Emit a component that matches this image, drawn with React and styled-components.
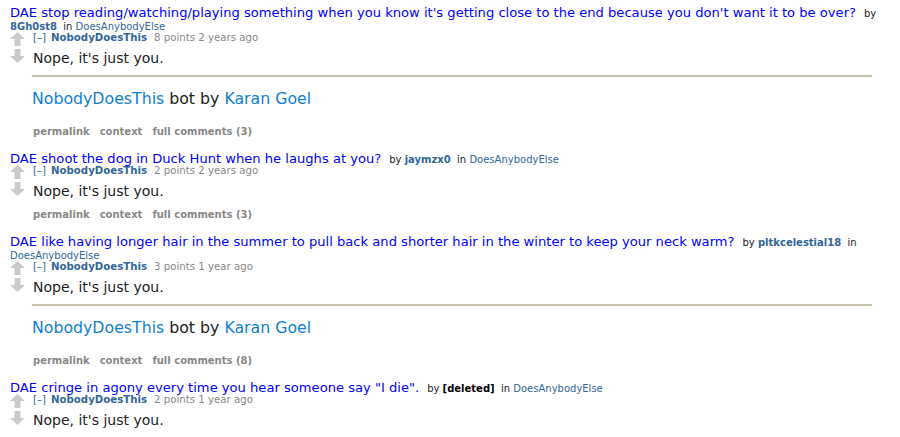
import React from 'react';
import styled, { createGlobalStyle } from 'styled-components';

const GlobalStyle = createGlobalStyle`
  body {
    margin: 0;
    background: #ffffff;
    font-family: 'DejaVu Sans', Verdana, sans-serif;
  }
`;

const Listing = styled.div`
  padding-top: 6px;
`;

const Thing = styled.div`
  margin-bottom: 13px;
`;

const Title = styled.p`
  margin: 0;
  padding: 0 10px;
  font-size: 13.1px;
  line-height: 13px;
  a {
    color: #0000ff;
    text-decoration: none;
  }
`;

const Meta = styled.span`
  font-size: 10px;
  line-height: 10px;
  color: #222;
  margin-left: 8px;
  b {
    color: #369;
    font-weight: bold;
  }
  .sub {
    color: #369;
  }
  .deleted {
    color: #000;
  }
`;

const Comment = styled.div`
  display: flex;
  margin-left: 10px;
  margin-top: -1px;
`;

const MidCol = styled.div`
  width: 23px;
  flex: none;
  display: flex;
  flex-direction: column;
  padding-top: 1px;
  gap: 3px;
`;

const Entry = styled.div`
  flex: 1;
  padding-right: 28px;
`;

const Tagline = styled.div`
  font-size: 10.2px;
  line-height: 13px;
  color: #888;
  .expand {
    color: #369;
    margin-right: 5px;
  }
  .author {
    color: #369;
    font-weight: bold;
    margin-right: 7px;
  }
`;

const Body = styled.div`
  font-size: 14px;
  line-height: 20px;
  color: #222;
  margin: 4px 0 3px;
`;

const BotFooter = styled.div`
  border-top: 2px solid #c5c1ad;
  margin: 7px 0 0 -1px;
  padding: 12px 0 0;
  font-size: 15.75px;
  line-height: 20px;
  color: #222;
  a {
    color: #0f7fd0;
    text-decoration: none;
  }
`;

const Buttons = styled.ul`
  display: flex;
  gap: 10px;
  list-style: none;
  margin: ${p => (p.$bot ? '16px' : '7px')} 0 0;
  padding: 0;
  li {
    font-size: 10px;
    font-weight: bold;
    color: #888;
    line-height: 14px;
  }
`;

function Arrow({ down }) {
  return (
    <svg width="15" height="14" viewBox="0 0 15 14" style={down ? { transform: 'scaleY(-1)' } : null}>
      <path d="M7.5 0 L15 7 L10.5 7 L10.5 14 L4.5 14 L4.5 7 L0 7 Z" fill="#cacaca" />
    </svg>
  );
}

const items = [
  {
    title: "DAE stop reading/watching/playing something when you know it's getting close to the end because you don't want it to be over?",
    by: '8Gh0st8',
    points: '8 points 2 years ago',
    bot: true,
    count: 3,
  },
  {
    title: 'DAE shoot the dog in Duck Hunt when he laughs at you?',
    by: 'jaymzx0',
    points: '2 points 2 years ago',
    bot: false,
    count: 3,
  },
  {
    title: 'DAE like having longer hair in the summer to pull back and shorter hair in the winter to keep your neck warm?',
    by: 'pltkcelestial18',
    points: '3 points 1 year ago',
    bot: true,
    count: 8,
  },
  {
    title: 'DAE cringe in agony every time you hear someone say "I die".',
    by: '[deleted]',
    deleted: true,
    points: '2 points 1 year ago',
    bot: false,
    count: null,
  },
];

export default function App() {
  return (
    <>
      <GlobalStyle />
      <Listing>
        {items.map((it, i) => (
          <Thing key={i}>
            <Title>
              <a href="#">{it.title}</a>
              <Meta>
                by{' '}
                {it.deleted ? <b className="deleted">{it.by}</b> : <b>{it.by}</b>}
                {'  '}&nbsp;in <span className="sub">DoesAnybodyElse</span>
              </Meta>
            </Title>
            <Comment>
              <MidCol>
                <Arrow />
                <Arrow down />
              </MidCol>
              <Entry>
                <Tagline>
                  <span className="expand">[–]</span>
                  <span className="author">NobodyDoesThis</span>
                  {it.points}
                </Tagline>
                <Body>Nope, it's just you.</Body>
                {it.bot && (
                  <BotFooter>
                    <a href="#">NobodyDoesThis</a> bot by <a href="#">Karan Goel</a>
                  </BotFooter>
                )}
                {it.count !== null && (
                  <Buttons $bot={it.bot}>
                    <li>permalink</li>
                    <li>context</li>
                    <li>full comments ({it.count})</li>
                  </Buttons>
                )}
              </Entry>
            </Comment>
          </Thing>
        ))}
      </Listing>
    </>
  );
}
